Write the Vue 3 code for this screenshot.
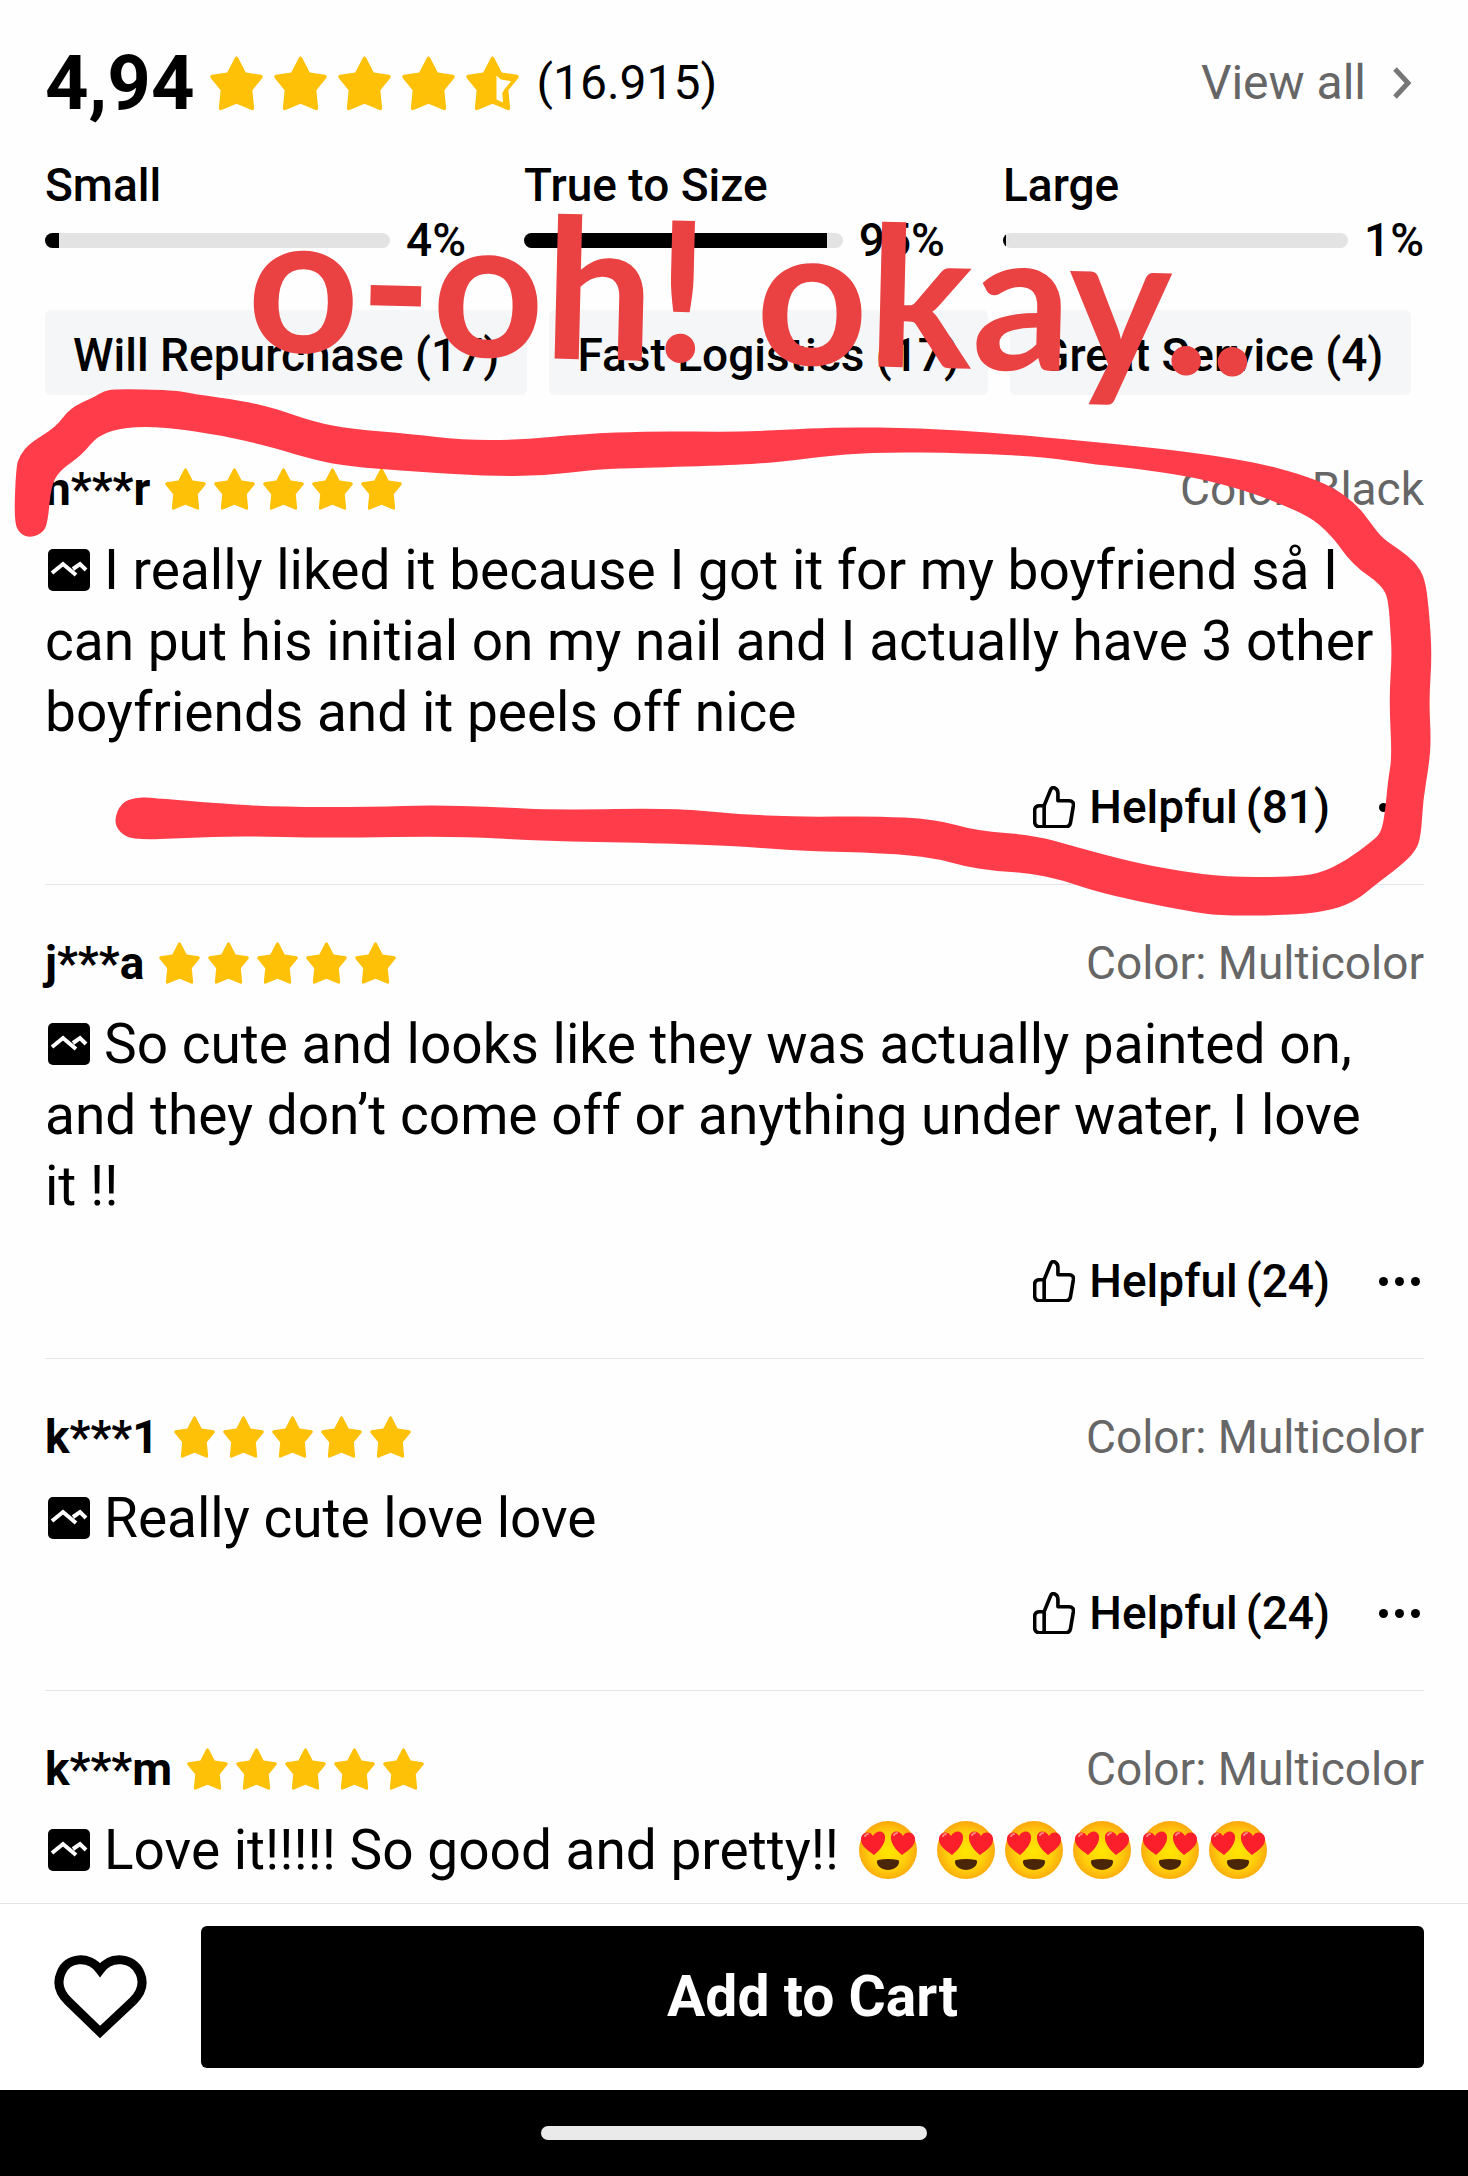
<template>
    <div class="page">
        <main class="content">
            <header class="summary">
                <strong class="score">4,94</strong>
                <span class="stars stars-large" role="img" aria-label="4,94">
                    <svg v-for="n in 5" :key="n" viewBox="0 0 120 122">
                        <path class="star" :d="starPath" />
                        <path v-if="n === 5" class="star-hole" d="M69 43l10 9 23 4-15 18-5 9 2 21-15-7z" />
                    </svg>
                </span>
                <span class="count">(16.915)</span>
                <a href="#" class="view-all">
                    View all
                    <svg viewBox="0 0 20 32"><path d="M3 2l13 14L3 30" /></svg>
                </a>
            </header>

            <section class="sizes">
                <div v-for="size in sizes" :key="size.label" class="size">
                    <div class="size-label">{{ size.label }}</div>
                    <div class="size-row">
                        <div class="track">
                            <div class="fill" :style="{ width: size.percent + '%' }"></div>
                        </div>
                        <span>{{ size.percent }}%</span>
                    </div>
                </div>
            </section>

            <div class="tags">
                <button v-for="tag in tags" :key="tag" class="tag">{{ tag }}</button>
            </div>

            <article v-for="review in reviews" :key="review.user" class="review">
                <div class="review-head">
                    <strong class="user">{{ review.user }}</strong>
                    <span class="stars" role="img" aria-label="5">
                        <svg v-for="n in 5" :key="n" viewBox="0 0 120 122">
                            <path class="star" :d="starPath" />
                        </svg>
                    </span>
                    <span class="color">Color: {{ review.color }}</span>
                </div>
                <p class="review-text">
                    <svg class="photo" viewBox="0 0 42 42">
                        <rect width="42" height="42" rx="5" />
                        <path d="M4 24l11-9 13 11M25 20l7-5 6 6" />
                    </svg>{{ review.text }}<template v-for="(group, g) in review.emojis" :key="g"><span class="emojis"><svg
                        v-for="n in group" :key="n" viewBox="0 0 58 58" role="img" aria-label="😍">
                        <defs>
                            <radialGradient id="face" cx=".5" cy=".52" r=".52">
                                <stop offset="0" stop-color="#ffe600" />
                                <stop offset=".6" stop-color="#ffd00a" />
                                <stop offset="1" stop-color="#fba70f" />
                            </radialGradient>
                        </defs>
                        <circle cx="29" cy="29" r="29" fill="url(#face)" />
                        <path class="heart-eye" d="M15 34C8 29 1 24 2 17c1-6 9-8 12-2 3-6 11-6 12 0 1 7-5 14-11 19z" />
                        <path class="heart-eye" d="M43 34C37 29 31 22 32 15c1-6 9-6 12 0 3-6 11-4 12 2 1 7-6 12-13 17z" />
                        <path class="shine" d="M6 15q1-2 3-2M35 14q1-2 3-2" />
                        <path class="mouth" d="M19 39q10-2 20 0c3 1 0 10-10 10s-13-9-10-10z" />
                    </svg></span></template>
                </p>
                <div v-if="review.helpful" class="actions">
                    <button class="helpful">
                        <svg viewBox="0 0 128 128">
                            <path d="M34 60L53 13Q57 2 66 6q10 5 10 17v22h34q15 1 13 15l-9 53q-2 11-13 11H20Q5 124 5 108V75q0-15 15-15h14v64" />
                        </svg>
                        <span>Helpful</span>
                        <span>({{ review.helpful }})</span>
                    </button>
                    <button class="more" aria-label="More">
                        <i></i><i></i><i></i>
                    </button>
                </div>
            </article>
        </main>

        <footer class="cart-bar">
            <button class="wish" aria-label="Wishlist">
                <svg viewBox="0 0 93 84">
                    <path d="M46 77L14 46C5 37 3 27 7 18 13 2 35 0 46 15 57 0 79 2 86 18c4 9 2 19-7 28z" />
                </svg>
            </button>
            <button class="add">Add to Cart</button>
        </footer>
        <div class="nav-bar"><div class="pill"></div></div>

        <!-- marker drawing and caption on top of the reviews -->
        <svg class="marker" viewBox="0 0 1468 2176">
            <path :d="markerPath" />
            <text x="246" y="351" transform="rotate(1.4 246 351)">o-oh! okay..</text>
        </svg>
    </div>
</template>

<script setup>
const starPath = 'M56 3q4-6 8 0l17 33 35 5q6 3 2 8L96 76l4 41q-1 6-6 4L60 107 26 121q-5 2-6-4l4-41L2 49q-4-5 2-8l35-5z';

const sizes = [
    { label: 'Small', percent: 4 },
    { label: 'True to Size', percent: 95 },
    { label: 'Large', percent: 1 },
];

const tags = ['Will Repurchase (17)', 'Fast Logistics (17)', 'Great Service (4)'];

const reviews = [
    {
        user: 'n***r',
        color: 'Black',
        text: 'I really liked it because I got it for my boyfriend så I can put his initial on my nail and I actually have 3 other boyfriends and it peels off nice',
        helpful: 81,
    },
    {
        user: 'j***a',
        color: 'Multicolor',
        text: 'So cute and looks like they was actually painted on, and they don’t come off or anything under water, I love it !!',
        helpful: 24,
    },
    { user: 'k***1', color: 'Multicolor', text: 'Really cute love love', helpful: 24 },
    { user: 'k***m', color: 'Multicolor', text: 'Love it!!!!! So good and pretty!!', emojis: [1, 5] },
];

// outer edge clockwise, then back along the inner edge
const markerPoints = [
    [14, 522], [16, 467], [20, 455], [30, 443], [56, 427], [70, 408], [94, 397], [104, 391], [115, 389], [173, 390],
    [194, 394], [243, 401], [274, 408], [314, 422], [351, 429], [412, 434], [461, 440], [520, 440], [581, 434],
    [651, 431], [734, 432], [781, 430], [837, 427], [921, 428], [996, 433], [1085, 441], [1183, 451], [1254, 462],
    [1300, 474], [1333, 487], [1357, 505], [1370, 522], [1382, 538], [1400, 550], [1415, 562], [1425, 578],
    [1429, 610], [1432, 655], [1429, 700], [1431, 740], [1429, 765], [1423, 800], [1421, 837], [1415, 852],
    [1399, 867], [1375, 885], [1357, 900], [1333, 910], [1296, 915], [1221, 916], [1188, 911], [1141, 902],
    [1094, 891], [1062, 880], [1029, 873], [994, 871], [963, 866], [935, 858], [884, 853], [804, 851], [734, 846],
    [655, 843], [538, 841], [459, 836], [328, 838], [239, 836], [187, 838], [133, 840], [119, 832], [114, 820],
    [121, 803], [136, 797], [154, 798], [201, 802], [272, 807], [375, 807], [431, 805], [492, 807], [557, 810],
    [674, 808], [734, 814], [800, 817], [874, 816], [935, 819], [977, 831], [1034, 835], [1076, 847], [1132, 862],
    [1179, 871], [1226, 877], [1286, 877], [1319, 874], [1347, 860], [1371, 842], [1381, 833], [1385, 813],
    [1388, 780], [1392, 757], [1389, 700], [1392, 655], [1390, 625], [1389, 608], [1386, 592], [1375, 580],
    [1361, 571], [1346, 556], [1335, 540], [1315, 520], [1286, 506], [1244, 490], [1193, 477], [1132, 468],
    [1099, 465], [1043, 457], [968, 453], [874, 452], [818, 457], [781, 462], [734, 465], [641, 468], [599, 469],
    [543, 476], [487, 476], [421, 472], [342, 466], [300, 456], [272, 447], [220, 435], [164, 427], [126, 427],
    [98, 435], [82, 455], [59, 471], [51, 487], [48, 520], [44, 532], [31, 538], [20, 534],
];

// smooth closed line through the midpoints
const toSmoothPath = (points) => {
    const mid = (a, b) => `${(a[0] + b[0]) / 2} ${(a[1] + b[1]) / 2}`;
    const last = points[points.length - 1];
    let d = `M${mid(last, points[0])}`;
    points.forEach((p, i) => {
        d += `Q${p[0]} ${p[1]} ${mid(p, points[(i + 1) % points.length])}`;
    });
    return d + 'Z';
};

const markerPath = toSmoothPath(markerPoints);
</script>

<style>
body {
    margin: 0;
    background: #fefefe;
}
</style>

<style scoped>
.page {
    position: relative;
    display: flex;
    flex-direction: column;
    min-height: 100vh;
    overflow: hidden;
    font-family: Roboto, "Liberation Sans", sans-serif;
    font-size: 46px;
    line-height: 64px;
    color: #000;
}

button {
    padding: 0;
    border: none;
    background: none;
    font: inherit;
    color: inherit;
    cursor: pointer;
}

svg {
    display: block;
    flex: none;
}

.content {
    flex: 1;
    padding: 35px 44px 0 45px;
}

.summary {
    display: flex;
    align-items: center;
    height: 96px;
    font-size: 48px;
}

.score {
    font-size: 76px;
    line-height: 96px;
}

.stars {
    display: flex;
    gap: 8px;
    margin-left: 15px;
}

.stars svg {
    width: 41px;
    height: 42px;
}

.stars-large {
    gap: 11px;
}

.stars-large svg {
    width: 53px;
    height: 55px;
}

.star {
    fill: #ffc107;
}

.star-hole {
    fill: #fefefe;
}

.count {
    margin-left: 18px;
}

.view-all {
    display: flex;
    align-items: center;
    gap: 26px;
    margin-left: auto;
    padding-right: 12px;
    color: #666;
    text-decoration: none;
}

.view-all svg {
    width: 20px;
    height: 32px;
}

.view-all path {
    fill: none;
    stroke: #777;
    stroke-width: 5;
}

.sizes {
    display: grid;
    grid-template-columns: repeat(3, 1fr);
    gap: 58px;
    margin-top: 26px;
    font-weight: 500;
    line-height: 55px;
}

.size-label {
    line-height: 56px;
}

.size-row {
    display: flex;
    align-items: center;
    gap: 16px;
}

.track {
    flex: 1;
    height: 15px;
    border-radius: 8px;
    background: #e3e3e3;
    overflow: hidden;
}

.fill {
    height: 100%;
    background: #000;
}

.tags {
    display: flex;
    gap: 22px;
    margin: 42px 0 16px;
}

.tag {
    padding: 17px 28px 12px;
    border-radius: 6px;
    background: #f5f6f7;
    font-weight: 500;
    line-height: 56px;
    white-space: nowrap;
}

.review {
    padding: 46px 0 45px;
    border-bottom: 1px solid #e5e5e5;
}

.review:last-child {
    padding-bottom: 8px;
    border-bottom: none;
}

.review-head {
    display: flex;
    align-items: center;
}

.color {
    margin-left: auto;
    color: #666;
}

.review-text {
    margin: 14px 0 0;
    padding-right: 32px;
    font-size: 55px;
    line-height: 71px;
}

.photo {
    display: inline-block;
    width: 42px;
    height: 42px;
    margin: 0 14px 0 3px;
    vertical-align: -2px;
}

.photo path {
    fill: none;
    stroke: #fff;
    stroke-width: 4;
}

.emojis {
    display: inline-flex;
    gap: 10px;
    margin-left: 20px;
    vertical-align: -10px;
}

.emojis svg {
    width: 58px;
    height: 58px;
}

.heart-eye {
    fill: #fb1f2b;
}

.shine {
    fill: none;
    stroke: #ff8a80;
    stroke-width: 2;
    stroke-linecap: round;
}

.mouth {
    fill: #4a2508;
}

.actions {
    display: flex;
    justify-content: flex-end;
    align-items: center;
    gap: 49px;
    margin-top: 27px;
}

.helpful {
    display: flex;
    align-items: center;
    gap: 8px;
    font-weight: 500;
}

.helpful svg {
    width: 42px;
    height: 42px;
    margin-right: 6px;
}

.helpful path {
    fill: none;
    stroke: #000;
    stroke-width: 11;
    stroke-linejoin: round;
}

.more {
    display: flex;
    gap: 7px;
    padding-right: 4px;
}

.more i {
    width: 9px;
    height: 9px;
    border-radius: 50%;
    background: #000;
}

.cart-bar {
    display: flex;
    align-items: center;
    gap: 54px;
    padding: 22px 44px 22px 54px;
    border-top: 1px solid #e5e5e5;
    background: #fff;
}

.wish svg {
    width: 93px;
    height: 84px;
}

.wish path {
    fill: none;
    stroke: #000;
    stroke-width: 9;
}

.add {
    flex: 1;
    height: 142px;
    border-radius: 6px;
    background: #000;
    color: #fff;
    font-size: 57px;
    font-weight: 700;
}

.nav-bar {
    display: flex;
    justify-content: center;
    align-items: center;
    height: 86px;
    background: #000;
}

.pill {
    width: 386px;
    height: 14px;
    border-radius: 7px;
    background: #eaeaea;
}

.marker {
    position: absolute;
    top: 0;
    left: 0;
    width: 100%;
    pointer-events: none;
}

.marker path {
    fill: #ff3d4a;
}

.marker text {
    fill: #ea4242;
    font-family: Lato, Roboto, sans-serif;
    font-size: 195px;
    font-weight: 700;
}
</style>
